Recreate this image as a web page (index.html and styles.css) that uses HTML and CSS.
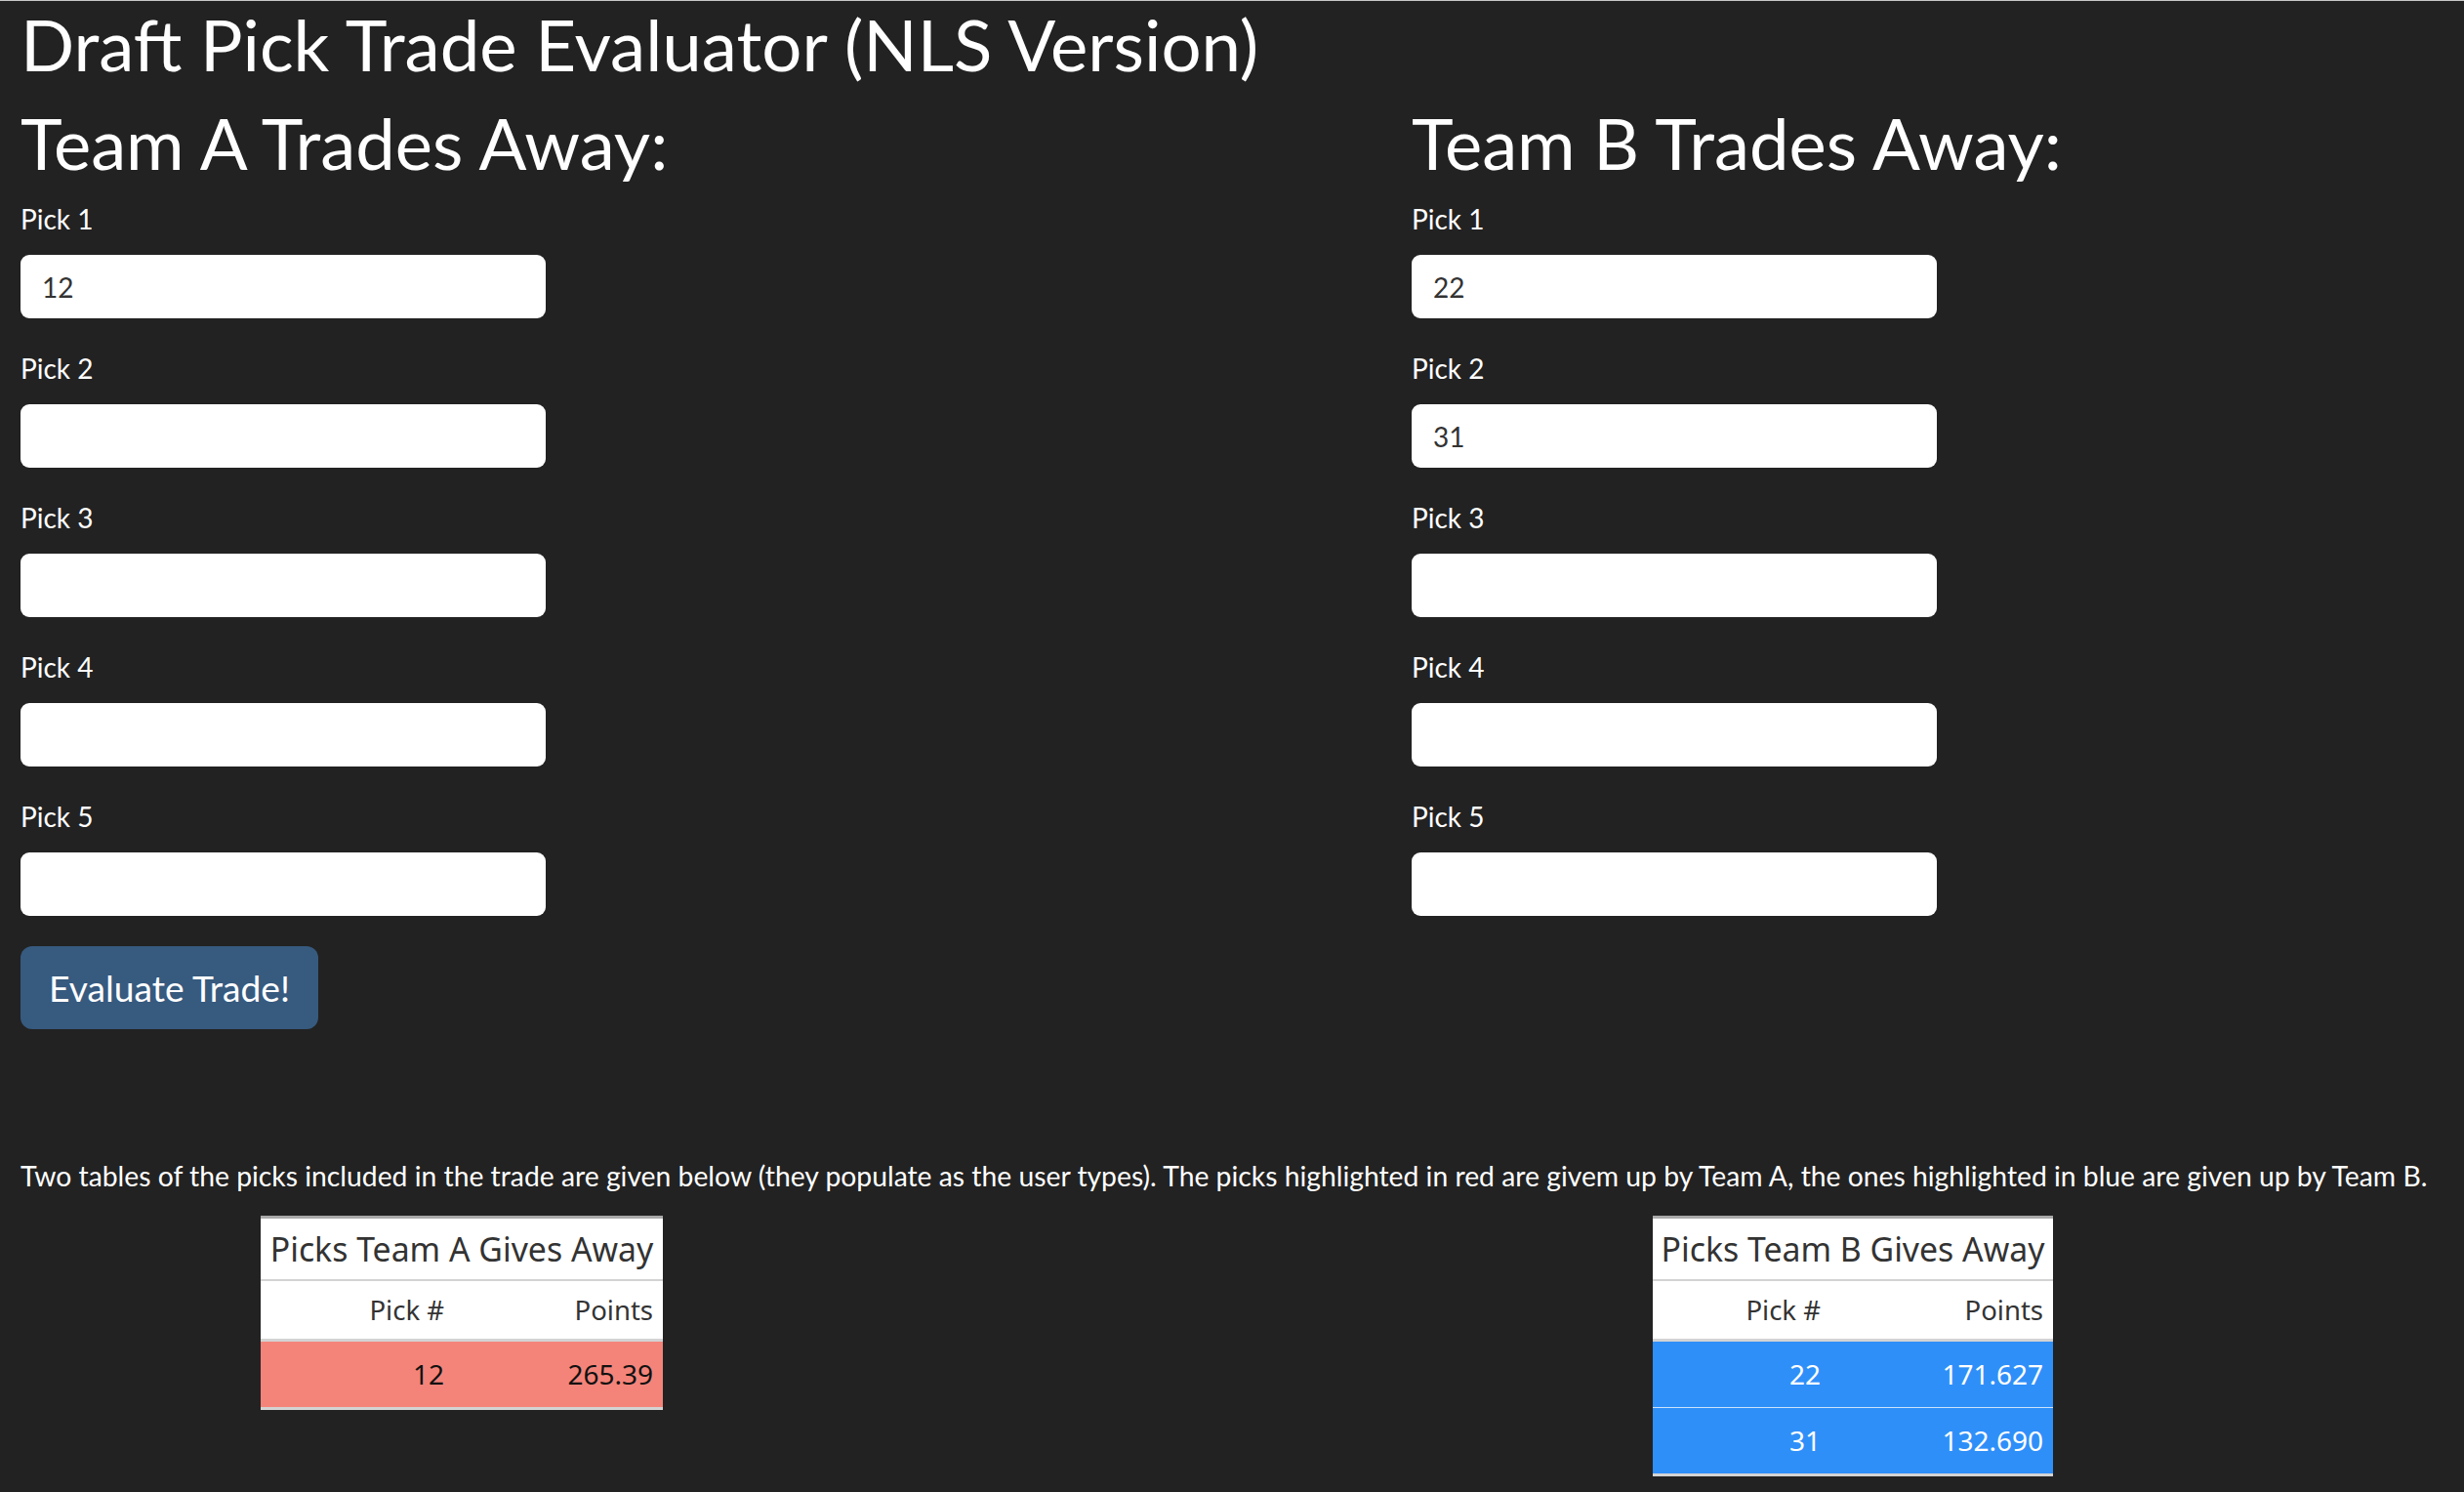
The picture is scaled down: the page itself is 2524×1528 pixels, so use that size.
FILE: index.html
```html
<!DOCTYPE html>
<html lang="en">
<head>
<meta charset="utf-8">
<title>Draft Pick Trade Evaluator (NLS Version)</title>
<link rel="stylesheet" href="styles.css">
</head>
<body>
<div class="page">
  <h1 class="title">Draft Pick Trade Evaluator (NLS Version)</h1>
  <div class="columns">
    <div class="team-col">
      <h2 class="team-heading">Team A Trades Away:</h2>
      <div class="field"><label class="field-label">Pick 1</label><input class="field-input" type="text" value="12"></div>
      <div class="field"><label class="field-label">Pick 2</label><input class="field-input" type="text" value=""></div>
      <div class="field"><label class="field-label">Pick 3</label><input class="field-input" type="text" value=""></div>
      <div class="field"><label class="field-label">Pick 4</label><input class="field-input" type="text" value=""></div>
      <div class="field"><label class="field-label">Pick 5</label><input class="field-input" type="text" value=""></div>
      <button class="eval-btn" type="button">Evaluate Trade!</button>
    </div>
    <div class="team-col">
      <h2 class="team-heading">Team B Trades Away:</h2>
      <div class="field"><label class="field-label">Pick 1</label><input class="field-input" type="text" value="22"></div>
      <div class="field"><label class="field-label">Pick 2</label><input class="field-input" type="text" value="31"></div>
      <div class="field"><label class="field-label">Pick 3</label><input class="field-input" type="text" value=""></div>
      <div class="field"><label class="field-label">Pick 4</label><input class="field-input" type="text" value=""></div>
      <div class="field"><label class="field-label">Pick 5</label><input class="field-input" type="text" value=""></div>
    </div>
  </div>
  <p class="note">Two tables of the picks included in the trade are given below (they populate as the user types). The picks highlighted in red are givem up by Team A, the ones highlighted in blue are given up by Team B.</p>
  <div class="tables">
    <div class="table-slot">
      <table class="pick-table table-a">
        <colgroup><col class="col-pick"><col class="col-points"></colgroup>
        <thead>
          <tr><th colspan="2" class="cap">Picks Team A Gives Away</th></tr>
          <tr class="head-row"><th>Pick #</th><th>Points</th></tr>
        </thead>
        <tbody>
          <tr class="row-red last"><td>12</td><td>265.39</td></tr>
        </tbody>
      </table>
    </div>
    <div class="table-slot">
      <table class="pick-table table-b">
        <colgroup><col class="col-pick"><col class="col-points"></colgroup>
        <thead>
          <tr><th colspan="2" class="cap">Picks Team B Gives Away</th></tr>
          <tr class="head-row"><th>Pick #</th><th>Points</th></tr>
        </thead>
        <tbody>
          <tr class="row-blue"><td>22</td><td>171.627</td></tr>
          <tr class="row-blue last"><td>31</td><td>132.690</td></tr>
        </tbody>
      </table>
    </div>
  </div>
</div>
</body>
</html>
```
FILE: styles.css
```css
html, body {
  margin: 0;
  padding: 0;
}

body {
  background: #222222;
  color: #ffffff;
  font-family: Lato, "Liberation Sans", sans-serif;
  border-top: 1px solid #c8c8c8;
}

.page {
  padding: 0 21px;
}

.title {
  margin: 4px 0 0;
  font-size: 72.6px;
  line-height: 80px;
  font-weight: 400;
  white-space: nowrap;
}

.columns {
  display: grid;
  grid-template-columns: 1425px 1fr;
  margin-top: 21px;
}

.team-heading {
  margin: 0;
  font-size: 72.4px;
  line-height: 80px;
  font-weight: 400;
  white-space: nowrap;
}

.field {
  margin-top: 31px;
}

.team-heading + .field {
  margin-top: 18px;
}

.field-label {
  display: block;
  font-size: 28px;
  line-height: 40px;
  font-weight: 400;
}

.field-input {
  display: block;
  margin: 17px 0 0;
  width: 538px;
  height: 65px;
  box-sizing: border-box;
  border: 0;
  border-radius: 9px;
  padding: 0 22px;
  background: #ffffff;
  color: #333333;
  font-family: Lato, "Liberation Sans", sans-serif;
  font-size: 28px;
  outline: none;
}

.eval-btn {
  display: block;
  margin-top: 31px;
  width: 305px;
  height: 85px;
  padding: 0;
  border: 0;
  border-radius: 12px;
  background: #375a7f;
  color: #ffffff;
  font-family: Lato, "Liberation Sans", sans-serif;
  font-size: 37.2px;
  line-height: 85px;
}

.note {
  margin: 130px 0 0;
  font-size: 28.3px;
  line-height: 40px;
  white-space: nowrap;
}

.tables {
  display: grid;
  grid-template-columns: 1425px 1fr;
  margin-top: 21px;
}

.table-slot {
  width: 904px;
  display: flex;
  justify-content: center;
  align-items: flex-start;
}

.pick-table {
  border-collapse: separate;
  border-spacing: 0;
  table-layout: fixed;
  background: #ffffff;
  color: #333333;
  font-family: "Noto Sans", "Open Sans", sans-serif;
}

.table-a { width: 412px; }
.table-a .col-pick { width: 198px; }
.table-a .col-points { width: 214px; }

.table-b { width: 410px; }
.table-b .col-pick { width: 182px; }
.table-b .col-points { width: 228px; }

.pick-table th,
.pick-table td {
  padding: 0 10px 0 0;
  font-weight: 400;
  text-align: right;
  white-space: nowrap;
}

.pick-table .cap {
  padding: 0;
  text-align: center;
  font-size: 33.8px;
  line-height: 62px;
  border-top: 3px solid #a9a9a9;
  border-bottom: 2px solid #d3d3d3;
}

.head-row th {
  font-size: 27.5px;
  line-height: 59px;
  border-bottom: 3px solid #d3d3d3;
}

.pick-table td {
  font-size: 28px;
  line-height: 67px;
}

.row-red td {
  background: #f4847a;
  color: #111111;
}

.row-blue td {
  background: #2f8ff9;
  color: #ffffff;
  border-bottom: 1px solid #cde2fb;
}

.pick-table tr.last td {
  border-bottom: 3px solid #d3d3d3;
}
```
